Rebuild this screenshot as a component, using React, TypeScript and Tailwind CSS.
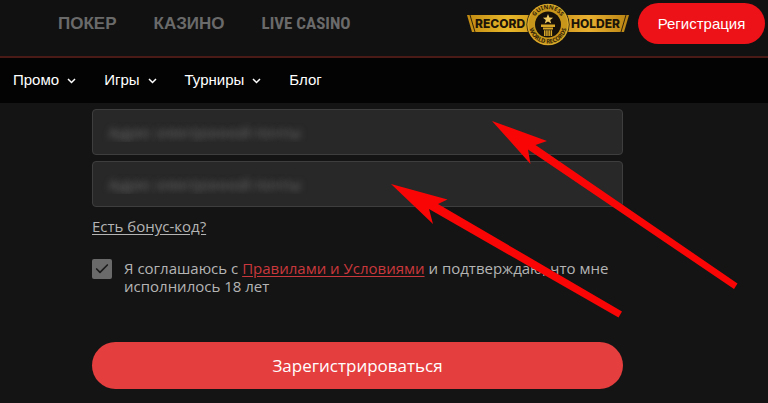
import { Check } from "lucide-react";

const menu = [
  { label: "Промо", hasItems: true },
  { label: "Игры", hasItems: true },
  { label: "Турниры", hasItems: true },
  { label: "Блог", hasItems: false },
];

const RecordHolder = () => (
  <svg
    viewBox="0 0 162 44"
    className="h-11 w-[162px] shrink-0"
    role="img"
    aria-label="Guinness World Records record holder"
  >
    <defs>
      <linearGradient id="gold" x1="0" x2="1">
        <stop offset="0" stopColor="#c08a12" />
        <stop offset="0.25" stopColor="#e9b82a" />
        <stop offset="0.5" stopColor="#c48d14" />
        <stop offset="0.75" stopColor="#e9b030" />
        <stop offset="1" stopColor="#b98413" />
      </linearGradient>
      <path id="arcTop" d="M66.1 26.5a15.4 15.4 0 1 1 29.8 0" />
      <path id="arcBottom" d="M64.3 13.5a19 19 0 1 0 33.4 0" />
    </defs>
    <path d="M0 13h162l-5 17H5z" fill="url(#gold)" />
    <path d="M3 13l5 17M159 13l-5 17" stroke="#31230a" strokeWidth="1" />
    <g
      fill="#1d1508"
      fontFamily="Inter, sans-serif"
      fontWeight="800"
      fontSize="12"
    >
      <text x="8" y="26">RECORD</text>
      <text x="104" y="26">HOLDER</text>
    </g>
    <circle cx="81" cy="22.5" r="21.5" fill="#111" />
    <circle cx="81" cy="22.5" r="20.8" fill="#c7961b" />
    <circle cx="81" cy="22.5" r="20" fill="none" stroke="#e2b63a" strokeWidth="0.7" />
    <circle cx="81" cy="22.5" r="13" fill="#15110a" />
    <g
      fill="#332408"
      fontFamily="'Noto Sans', sans-serif"
      fontWeight="700"
      fontSize="6"
      textAnchor="middle"
    >
      <text>
        <textPath href="#arcTop" startOffset="50%">GUINNESS</textPath>
      </text>
      <text>
        <textPath href="#arcBottom" startOffset="50%">WORLD RECORDS</textPath>
      </text>
    </g>
    <g fill="#d9a728">
      <path
        fill="#f0cb62"
        d="M81 12l1.4 3.5 3.7.2-2.9 2.3 1 3.6-3.2-2-3.2 2 1-3.6-2.9-2.3 3.7-.2z"
      />
      <path d="M74 22.5h14v2.4H74zM76 25.6h10v2H76zM77 28.2h1.5V34H77zM79.2 28.2h1.5V34h-1.5zM81.4 28.2h1.5V34h-1.5zM83.6 28.2h1.5V34h-1.5z" />
    </g>
  </svg>
);

const Chevron = () => (
  <svg viewBox="0 0 9 6" className="h-1.5 w-[9px]" fill="none" aria-hidden="true">
    <path d="M1 1l3.5 3.5L8 1" stroke="currentColor" strokeWidth="1.5" />
  </svg>
);

const Header = () => (
  <header className="font-['Liberation_Sans',sans-serif]">
    <div className="flex h-[58px] items-start border-b-2 border-[#4a1a16] bg-[#111111] pr-[3px] pl-[58px]">
      <nav className="flex h-12 items-center gap-[37px] text-[17px] font-bold text-[#6a6a6a]">
        <a href="#poker">ПОКЕР</a>
        <a href="#casino">КАЗИНО</a>
        <a
          href="#live"
          className="font-['Roboto_Condensed','Liberation_Sans_Narrow',sans-serif]"
        >
          LIVE CASINO
        </a>
      </nav>
      <div className="ml-auto flex items-start gap-[9px] pt-[3px]">
        <div className="-mt-px">
          <RecordHolder />
        </div>
        <button
          type="button"
          className="h-[41px] w-[127px] rounded-full bg-[#ed1118] pt-0.5 text-[15px] text-white"
        >
          Регистрация
        </button>
      </div>
    </div>
    <nav className="flex h-[45px] items-center gap-7 bg-[#030303] px-[13px] text-[15px] text-white">
      {menu.map(({ label, hasItems }) => (
        <a key={label} href="#menu" className="flex items-center gap-2">
          {label}
          {hasItems && <Chevron />}
        </a>
      ))}
    </nav>
  </header>
);

const EmailField = ({ id }: { id: string }) => (
  <input
    id={id}
    type="email"
    aria-label="Адрес электронной почты"
    placeholder="Адрес электронной почты"
    className="h-[46px] w-full rounded-sm border border-[#3e3e3e] bg-[#282828] indent-4 text-[15px] placeholder:text-transparent placeholder:[text-shadow:0_0_7px_#727272]"
  />
);

const Arrows = () => (
  <svg
    viewBox="0 0 768 403"
    className="pointer-events-none absolute top-0 left-0 h-[403px] w-[768px]"
    fill="#fa0505"
    aria-hidden="true"
  >
    <path d="M492 121l55 20-11.5 4 202 138.5-3.5 5.5-206-139.5 2.5 14.5z" />
    <path d="M391 184l56.5 15.5-9.5 4.5 184 107.5-3.5 6-189.5-108.5 4 15z" />
  </svg>
);

export default function App() {
  return (
    <div className="relative min-h-screen overflow-hidden bg-[#141414] font-['Open_Sans','Noto_Sans',sans-serif]">
      <Header />
      <main className="pt-[6px] pr-[145px] pb-[14px] pl-[92px]">
        <form className="flex flex-col text-[15px] text-[#b4b4b4]">
          <div className="flex flex-col gap-[6px]">
            <EmailField id="email" />
            <EmailField id="email-repeat" />
          </div>
          <a
            href="#bonus"
            className="mt-2 self-start leading-[22px] underline underline-offset-2"
          >
            Есть бонус-код?
          </a>
          <div className="mt-[22px] flex items-start gap-3">
            <span className="grid shrink-0">
              <input
                id="terms"
                type="checkbox"
                defaultChecked
                className="col-start-1 row-start-1 size-5 appearance-none rounded-xs bg-[#6a6a6a]"
              />
              <Check
                className="pointer-events-none col-start-1 row-start-1 size-4 place-self-center text-[#1b1b1b]"
                strokeWidth={2.5}
              />
            </span>
            <label htmlFor="terms" className="leading-[18px]">
              Я соглашаюсь с{" "}
              <a href="#rules" className="text-[#c9383c] underline underline-offset-2">
                Правилами и Условиями
              </a>{" "}
              и подтверждаю, что мне исполнилось 18 лет
            </label>
          </div>
          <button
            type="button"
            className="mt-[47px] h-[47px] rounded-full bg-[#e53e3e] text-[17px] text-white"
          >
            Зарегистрироваться
          </button>
        </form>
      </main>
      <Arrows />
    </div>
  );
}
